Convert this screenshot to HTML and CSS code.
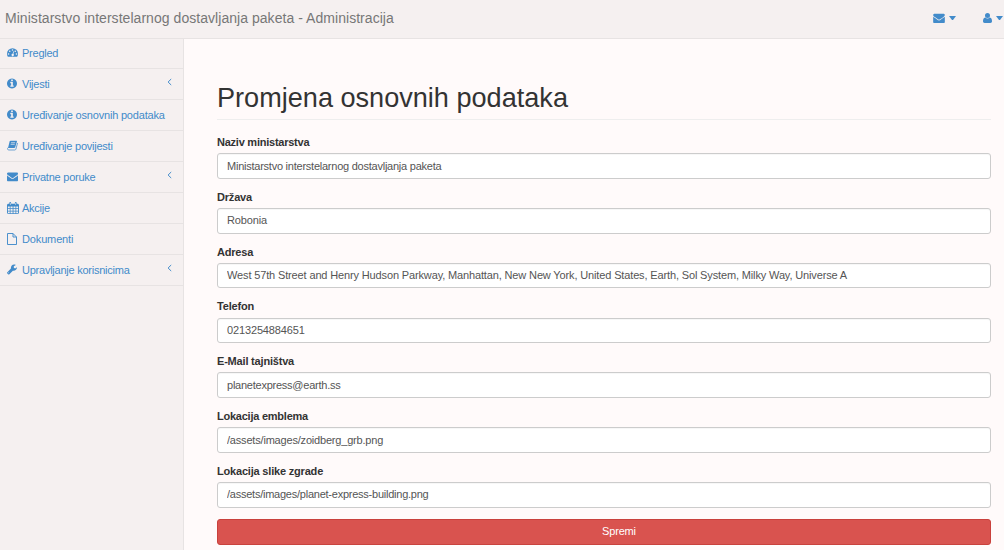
FILE: index.html
```html
<!DOCTYPE html>
<html lang="hr">
<head>
<meta charset="utf-8">
<title>Administracija</title>
<link rel="stylesheet" href="styles.css">
</head>
<body>
<svg class="defs" aria-hidden="true">
  <symbol id="envelope" viewBox="0 128 1792 1536"><path d="M1792 710v794q0 66-47 113t-113 47h-1472q-66 0-113-47t-47-113v-794q44 49 101 87 362 246 497 345 57 42 92.500 65.500t94.500 48 110 24.500h2q51 0 110-24.500t94.500-48 92.500-65.500q170-123 498-345 57-39 100-87zm0-294q0 79-49 151t-122 123q-376 261-468 325-10 7-42.500 31t-54 38.500-52 32.500-57.500 27-50 9h-2q-23 0-50-9t-57.500-27-52-32.500-54-38.500-42.500-31q-91-64-262-182.500t-205-142.500q-62-42-117-115.500t-55-136.500q0-78 41.500-130t118.500-52h1472q65 0 112.500 47t47.500 113z"/></symbol>
  <symbol id="info" viewBox="128 128 1536 1536"><path d="M1152 1376v-160q0-14-9-23t-23-9h-96v-512q0-14-9-23t-23-9h-320q-14 0-23 9t-9 23v160q0 14 9 23t23 9h96v320h-96q-14 0-23 9t-9 23v160q0 14 9 23t23 9h448q14 0 23-9t9-23zm-128-896v-160q0-14-9-23t-23-9h-192q-14 0-23 9t-9 23v160q0 14 9 23t23 9h192q14 0 23-9t9-23zm640 416q0 209-103 385.500t-279.500 279.500-385.500 103-385.500-103-279.500-279.500-103-385.500 103-385.500 279.500-279.500 385.500-103 385.500 103 279.500 279.500 103 385.500z"/></symbol>
  <symbol id="gauge" viewBox="0 0 14 12"><path fill-rule="evenodd" d="M7 .5a7 7 0 0 0-7 7c0 1.400.4 2.800 1.100 4h11.800c.7-1.200 1.100-2.600 1.100-4a7 7 0 0 0-7-7zM2 6.800a1 1 0 1 1 0 2 1 1 0 0 1 0-2zM3.500 3.300a1 1 0 1 1 0 2 1 1 0 0 1 0-2zM7 1.800a1 1 0 1 1 0 2 1 1 0 0 1 0-2zM10.500 3.300a1 1 0 1 1 0 2 1 1 0 0 1 0-2zM12 6.800a1 1 0 1 1 0 2 1 1 0 0 1 0-2zM8.100 4.500l.8.2-.8 3.100a1.500 1.500 0 1 1-.9-.2z"/></symbol>
  <symbol id="book" viewBox="0 0 13 12"><path d="M4.300.3h6.600c.7 0 1 .5.8 1.200L9.700 8.200c-.2.600-.6.900-1.300.9H1.200L3.100 1.300C3.300.6 3.700.3 4.300.3z"/><path fill="none" stroke="currentColor" stroke-width=".9" d="M1 8.600c-.9 1.500-.3 2.700 1.200 2.700h7c.7 0 1.100-.3 1.300-.9l2-7.400"/><path fill="none" stroke="#f5f0f0" stroke-width=".8" d="M4.800 2.700h4.800M4.300 4.600h4.800"/></symbol>
  <symbol id="calendar" viewBox="0 0 13 13"><path fill-rule="evenodd" d="M1 2h1.500V1a1 1 0 0 1 2 0v1h4V1a1 1 0 0 1 2 0v1H12l1 1v9l-1 1H1l-1-1V3zM1 5v1.800h2V5zm2.800 0v1.800h2.300V5zM7 5v1.800h2.200V5zm3 0v1.800h2V5zM1 7.600v1.900h2V7.600zm2.800 0v1.900h2.300V7.600zM7 7.600v1.900h2.200V7.600zm3 0v1.900h2V7.600zM1 10.300v1.800h2v-1.800zm2.800 0v1.800h2.300v-1.800zm3.200 0v1.800h2.200v-1.800zm3 0v1.800h2v-1.800zM3.200 1v2.200h.6V1zm6 0v2.200h.6V1z"/></symbol>
  <symbol id="file" viewBox="0 0 10 12"><path fill="none" stroke="currentColor" stroke-width=".95" d="M.5.500H6L9.500 4v7.500h-9zM6 .5V4h3.500"/></symbol>
  <symbol id="wrench" viewBox="0 0 11 11"><path fill-rule="evenodd" d="M6.500 6.800 2.600 10.600c-.4.500-1 .5-1.400 0l-.8-.8c-.5-.4-.5-1 0-1.400L4.300 4.500C4 2.200 5.500.2 7.800.1c.7 0 1.400.200 1.900.5L7.500 2v1.500l1.400.8L11 3c.2 2.200-1.500 4.100-4.500 3.800zM1.900 8.500a.5.500 0 1 0 0 1 .5.500 0 0 0 0-1z"/></symbol>
  <symbol id="user" viewBox="0 0 9 10"><path d="M4.500 0a2.500 2.500 0 1 1 0 5 2.500 2.500 0 0 1 0-5zM2.200 4.500c1.300 1.200 3.300 1.200 4.600 0C8.500 4.600 9 6.500 9 8.300c0 1-.7 1.700-1.600 1.700H1.600C.7 10 0 9.300 0 8.300c0-1.800.5-3.700 2.200-3.800z"/></symbol>
  <symbol id="angle" viewBox="0 0 5 8"><path fill="none" stroke="currentColor" stroke-width="1" d="M4.200 1 1.100 4l3.100 3"/></symbol>
</svg>
<header class="navbar">
  <a class="brand">Ministarstvo interstelarnog dostavljanja paketa - Administracija</a>
  <nav class="actions">
    <a class="action"><svg class="icon-mail"><use href="#envelope"/></svg><i class="caret"></i></a>
    <a class="action"><svg class="icon-user"><use href="#user"/></svg><i class="caret"></i></a>
  </nav>
</header>
<div class="wrapper">
  <ul class="sidebar">
    <li class="item"><svg class="icon w11"><use href="#gauge"/></svg><span class="tight">Pregled</span></li>
    <li class="item"><svg class="icon w10"><use href="#info"/></svg><span class="tight">Vijesti</span><svg class="angle"><use href="#angle"/></svg></li>
    <li class="item"><svg class="icon w10"><use href="#info"/></svg><span class="snug">Uređivanje osnovnih podataka</span></li>
    <li class="item"><svg class="icon w11"><use href="#book"/></svg><span class="tight">Uređivanje povijesti</span></li>
    <li class="item"><svg class="icon w11"><use href="#envelope"/></svg><span class="tight">Privatne poruke</span><svg class="angle"><use href="#angle"/></svg></li>
    <li class="item"><svg class="icon w12"><use href="#calendar"/></svg><span class="tight">Akcije</span></li>
    <li class="item"><svg class="icon w10 tall"><use href="#file"/></svg><span class="loose">Dokumenti</span></li>
    <li class="item"><svg class="icon w10"><use href="#wrench"/></svg><span class="tight">Upravljanje korisnicima</span><svg class="angle"><use href="#angle"/></svg></li>
  </ul>
  <main class="page">
    <h1 class="title">Promjena osnovnih podataka</h1>
    <form class="form">
      <div class="group"><label class="label tight">Naziv ministarstva</label><input class="field tight" value="Ministarstvo interstelarnog dostavljanja paketa"></div>
      <div class="group"><label class="label snug">Država</label><input class="field loose raised" value="Robonia"></div>
      <div class="group"><label class="label snug">Adresa</label><input class="field loose raised" value="West 57th Street and Henry Hudson Parkway, Manhattan, New New York, United States, Earth, Sol System, Milky Way, Universe A"></div>
      <div class="group"><label class="label snug">Telefon</label><input class="field loose" value="0213254884651"></div>
      <div class="group"><label class="label snug">E-Mail tajništva</label><input class="field tight" value="planetexpress@earth.ss"></div>
      <div class="group"><label class="label tight">Lokacija emblema</label><input class="field snug raised" value="/assets/images/zoidberg_grb.png"></div>
      <div class="group"><label class="label snug">Lokacija slike zgrade</label><input class="field tight raised" value="/assets/images/planet-express-building.png"></div>
      <button class="submit" type="button">Spremi</button>
    </form>
  </main>
</div>
</body>
</html>
```
FILE: styles.css
```css
* { box-sizing: border-box; }
body { margin: 0; height: 550px; overflow: hidden; background: #f5f0f0; font: 11px/15px "Liberation Sans", Arial, sans-serif; color: #333; }
.defs { display: none; }
svg { fill: currentColor; flex: none; }
.navbar { height: 39px; display: flex; align-items: center; justify-content: space-between; border-bottom: 1px solid #e7e3e3; padding-left: 5px; }
.brand { font-size: 14px; color: #777; letter-spacing: .045px; padding-bottom: 2px; white-space: nowrap; }
.actions { display: flex; gap: 27px; color: #428bca; padding: 0 1px 2px 0; }
.action { display: flex; align-items: center; gap: 3px; }
.icon-mail { width: 12px; height: 10px; margin-right: 1px; }
.icon-user { width: 9px; height: 10px; margin-right: 1px; }
.caret { border: 3.5px solid transparent; border-top: 4px solid; border-bottom: 0; width: 7px; }
.wrapper { display: flex; height: 511px; }
.sidebar { width: 183px; flex: none; margin: 0; padding: 0; list-style: none; color: #428bca; }
.item { height: 31px; display: flex; align-items: center; padding: 1px 11px 0 7px; border-bottom: 1px solid #e7e3e3; white-space: nowrap; }
.item:first-child { height: 30px; padding: 0 11px 0 7px; }
.icon { height: 11px; margin: 0 4px 2px 0; }
.w10 { width: 10px; margin-right: 5px; }
.w11 { width: 11px; }
.w12 { width: 12px; height: 12px; margin-right: 3px; }
.tall { height: 12px; }
.loose { letter-spacing: -.14px; }
.snug { letter-spacing: -.19px; }
.tight { letter-spacing: -.24px; }
.angle { width: 5px; height: 8px; margin: 0 0 5px auto; }
.page { flex: 1; background: #fffafa; border-left: 1px solid #e7e3e3; padding: 42px 13px 0 33px; }
.title { margin: 0 0 15px; font-size: 27.100px; line-height: 34px; height: 39px; font-weight: 400; border-bottom: 1px solid #eee; }
.form { display: flex; flex-direction: column; }
.group { height: 54.8px; display: flex; flex-direction: column; }
.label { font-weight: 700; height: 18.300px; line-height: 15px; }
.field { height: 25.500px; border: 1px solid #ccc; border-radius: 3px; background: #fff; color: #555; font: inherit; padding: 0 9px; width: 100%; box-shadow: inset 0 1px 1px #00000009; }
.raised { padding-bottom: 1px; }
.submit { height: 26px; border: 1px solid #c9413c; border-radius: 3px; background: #d9534f; color: #fff; font: inherit; letter-spacing: -.18px; padding: 0 0 1px 30px; }
```
